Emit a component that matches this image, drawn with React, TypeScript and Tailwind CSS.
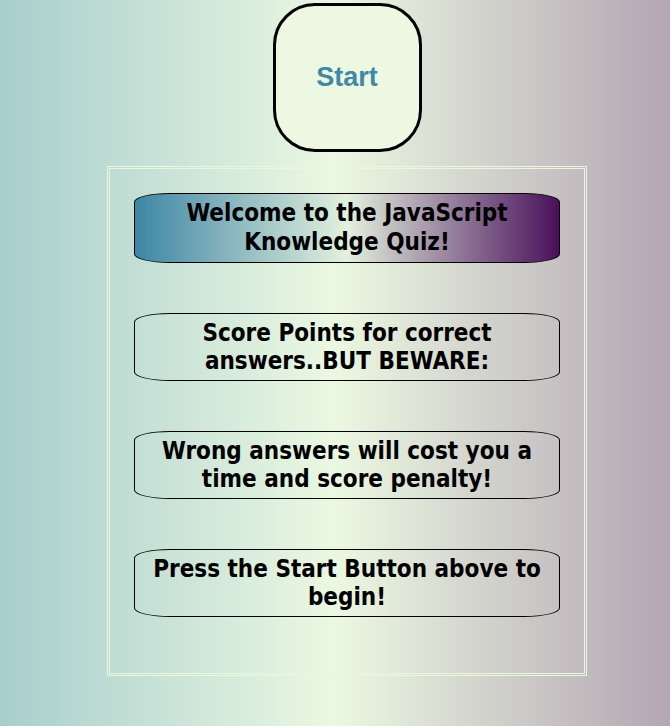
import React from "react";

const messages = [
  "Score Points for correct answers..BUT BEWARE:",
  "Wrong answers will cost you a time and score penalty!",
  "Press the Start Button above to begin!",
];

export default function App() {
  return (
    <div className="min-h-screen bg-gradient-to-r from-[#a8cecd] via-[#ebf8e1] to-[#b4a6b3] pl-6 pt-[3px] font-['DejaVu_Sans_Condensed','DejaVu_Sans',sans-serif]">
      <div className="flex flex-col items-center">
        {/* Start button */}
        <button className="flex h-[149px] w-[149px] items-center justify-center rounded-[42px] border-[3px] border-black bg-[#ecf8e2] font-['Liberation_Sans',Arial,sans-serif] text-[27px] font-bold text-[#3f88a6]">
          Start
        </button>

        {/* Intro box */}
        <div className="mt-[14px] flex h-[510px] w-[480px] flex-col gap-[50px] border-[3px] border-double border-[#eaf7df] pl-6 pr-[24px] pt-6">
          <div className="flex h-[70px] items-center justify-center rounded-[36px/9px] border border-black bg-gradient-to-r from-[#3c86a5] via-[#e3f1dc] to-[#4a0c5b] text-center text-[24px] font-bold leading-[29px] text-black">
            <span className="px-2">Welcome to the JavaScript Knowledge Quiz!</span>
          </div>
          {messages.map((msg) => (
            <div
              key={msg}
              className="flex h-[68px] items-center justify-center rounded-[36px/9px] border border-black text-center text-[24px] font-bold leading-[28px] text-black"
            >
              <span className="px-4">{msg}</span>
            </div>
          ))}
        </div>
      </div>
    </div>
  );
}
